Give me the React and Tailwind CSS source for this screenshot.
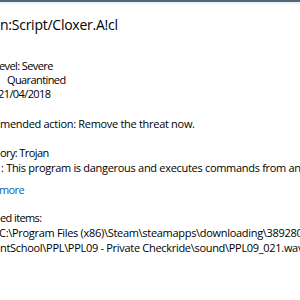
import React from "react";

const Line = ({ className = "", tight = false, children }) => (
  <div
    className={`h-[14px] whitespace-nowrap text-[11px] leading-[14px] ${
      tight ? "tracking-[-0.6px]" : "tracking-[-0.3px]"
    } ${className}`}
  >
    {children}
  </div>
);

const App = () => {
  return (
    <div className="relative h-[300px] w-[300px] overflow-hidden bg-white font-['Open_Sans',sans-serif] text-black">
      <div className="h-[2px] bg-[#52677a]" />
      <div className="h-[2px] bg-[#eaf2f8]" />

      <div className="mt-[11px] h-[20px] whitespace-nowrap text-[14px] leading-[20px] tracking-[-0.25px]">
        n:Script/Cloxer.A!cl
      </div>

      <Line tight className="mt-[24px] -ml-px">evel: Severe</Line>
      <Line tight className="ml-[7px]">Quarantined</Line>
      <Line tight className="-ml-[2px]">21/04/2018</Line>

      <Line className="mt-[16px]">mended action: Remove the threat now.</Line>

      <Line tight className="mt-[15px]">ory: Trojan</Line>
      <Line className="mt-px ml-px">: This program is dangerous and executes commands from an attacker.</Line>

      <Line tight className="mt-[8px] -ml-px text-[#0063b1]">more</Line>

      <Line tight className="mt-[14px]">ed items:</Line>
      <Line className="mt-px -ml-px">C:\Program Files (x86)\Steam\steamapps\downloading\389280\FlightSchool</Line>
      <Line className="mt-px">ntSchool\PPL\PPL09 - Private Checkride\sound\PPL09_021.wav</Line>
    </div>
  );
};

export default App;
